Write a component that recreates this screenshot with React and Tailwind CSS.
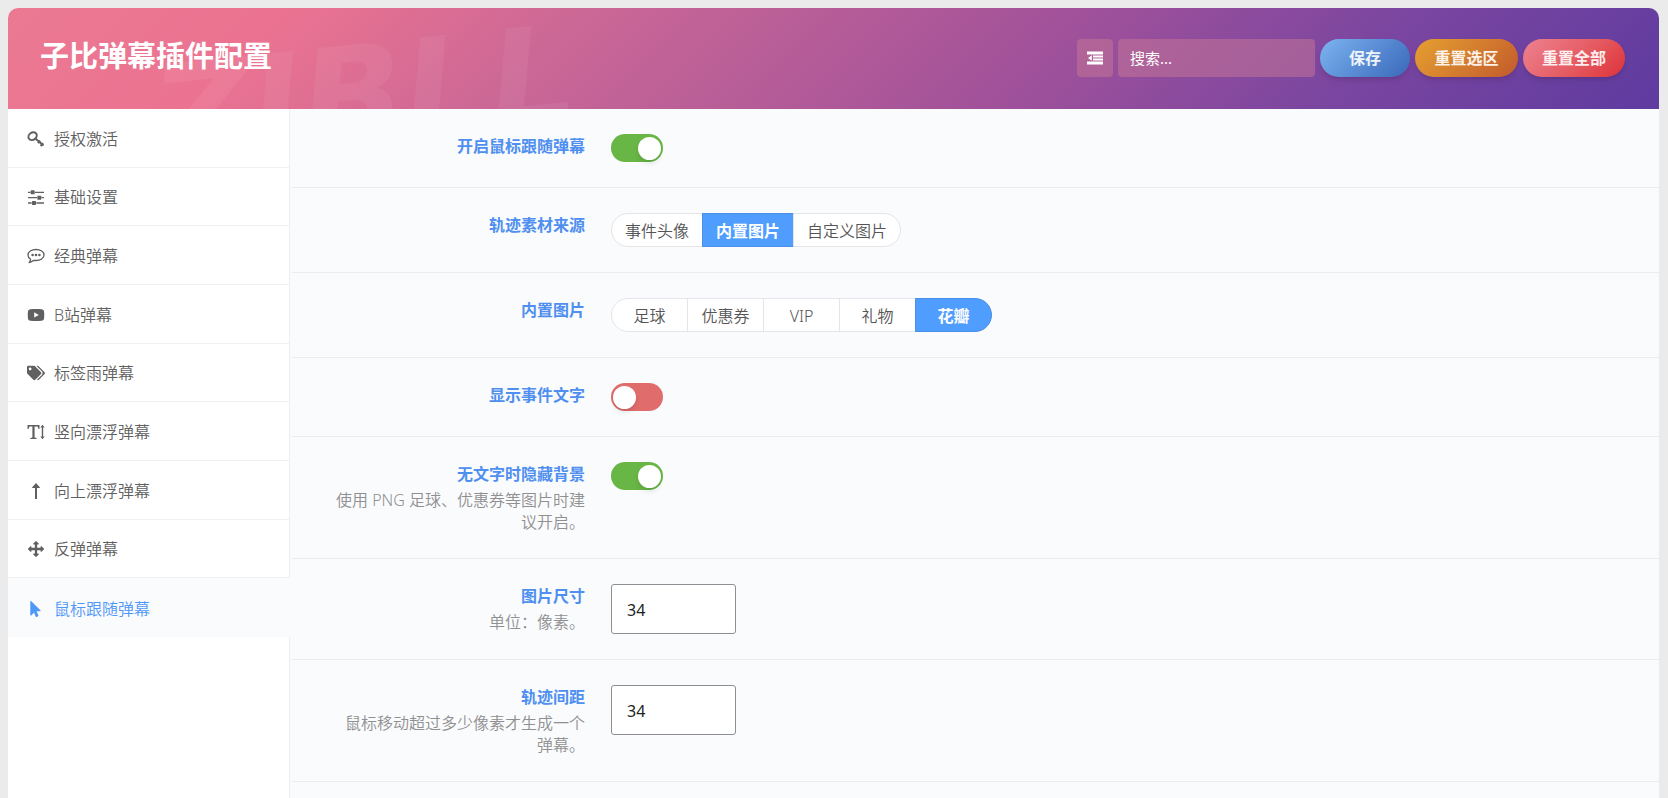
import React, { useState } from 'react'
import { FaTags } from 'react-icons/fa'

const menuItems = [
  { label: '授权激活', icon: KeyIcon },
  { label: '基础设置', icon: SlidersIcon },
  { label: '经典弹幕', icon: CommentIcon },
  { label: 'B站弹幕', icon: PlayIcon },
  { label: '标签雨弹幕', icon: FaTags },
  { label: '竖向漂浮弹幕', icon: TextHeightIcon },
  { label: '向上漂浮弹幕', icon: ArrowUpIcon },
  { label: '反弹弹幕', icon: MoveIcon },
  { label: '鼠标跟随弹幕', icon: PointerIcon }
]

const sources = ['事件头像', '内置图片', '自定义图片']
const pictures = ['足球', '优惠券', 'VIP', '礼物', '花瓣']

export default function App() {
  const [active, setActive] = useState('鼠标跟随弹幕')
  const [enabled, setEnabled] = useState(true)
  const [source, setSource] = useState('内置图片')
  const [picture, setPicture] = useState('花瓣')
  const [showText, setShowText] = useState(false)
  const [hideBg, setHideBg] = useState(true)
  const [size, setSize] = useState('34')
  const [distance, setDistance] = useState('34')

  return (
    <div className="flex min-h-screen flex-col bg-[#eaebea] pt-2 pr-[9px] pl-2 font-['Noto_Sans','Noto_Sans_CJK_SC',sans-serif] text-base font-[350] text-[#555]">
      <div className="flex grow flex-col overflow-hidden rounded-t-[10px] bg-white">
        {/* Header */}
        <header className="relative flex items-start justify-between overflow-hidden bg-[linear-gradient(135deg,#eb7992_0%,#eb7391_16%,#ca6796_34%,#a0519a_62%,#7b46a0_80%,#5f3ba0_100%)] pt-[31px] pr-[34px] pb-8 pl-8">
          <span aria-hidden="true" className="pointer-events-none absolute top-5 left-[145px] -rotate-6 font-['DejaVu_Sans',sans-serif] text-[135px] leading-none font-bold text-white/6 italic">ZIBLL</span>
          <h1 className="relative text-[29px] leading-[34px] font-bold text-white">子比弹幕插件配置</h1>
          <div className="relative flex items-center gap-[5px]">
            <button aria-label="展开全部" className="flex h-[38px] w-9 items-center justify-center rounded bg-[#c87896]/50 text-white">
              <OutdentIcon className="h-4 w-4" />
            </button>
            <input
              type="text"
              aria-label="搜索"
              placeholder="搜索..."
              className="h-[38px] w-[197px] rounded bg-[#c87896]/50 px-3 text-[15px] font-normal text-white placeholder:text-white focus:outline-none"
            />
            <button className="h-[38px] w-[90px] rounded-full bg-linear-135 from-[#7db4f0] to-[#3a68ba] font-bold text-white/90 shadow-md">保存</button>
            <button className="h-[38px] w-[103px] rounded-full bg-linear-135 from-[#e5a030] to-[#c25a2c] font-bold text-white/90 shadow-md">重置选区</button>
            <button className="h-[38px] w-[102px] rounded-full bg-linear-135 from-[#ec8290] to-[#dd2f38] font-bold text-white/90 shadow-md">重置全部</button>
          </div>
        </header>

        <div className="flex grow">
          {/* Sidebar */}
          <aside className="w-[282px] shrink-0 border-r border-[#eceef0]">
            <nav className="grid h-[528px] grid-rows-9">
              {menuItems.map(({ label, icon: Icon }) => (
                <a
                  key={label}
                  href="#"
                  onClick={() => setActive(label)}
                  className={
                    active === label
                      ? '-mr-px flex items-center gap-[9px] bg-[#fafbfd] pt-0.5 pl-[19px] text-[#4f97f7]'
                      : 'flex items-center gap-[9px] border-b border-[#f0f0f0] pt-0.5 pl-[19px] text-[#606060]'
                  }
                >
                  <Icon className="h-4 w-[18px]" />
                  {label}
                </a>
              ))}
            </nav>
          </aside>

          {/* Fields */}
          <main className="grow bg-[#fafbfd] pl-0.5">
            <Field id="enabled" title="开启鼠标跟随弹幕">
              <Toggle id="enabled" checked={enabled} onChange={setEnabled} />
            </Field>
            <Field title="轨迹素材来源">
              <ButtonSet name="轨迹素材来源" options={sources} value={source} onChange={setSource} />
            </Field>
            <Field title="内置图片">
              <ButtonSet name="内置图片" options={pictures} value={picture} onChange={setPicture} />
            </Field>
            <Field id="showText" title="显示事件文字">
              <Toggle id="showText" checked={showText} onChange={setShowText} />
            </Field>
            <Field id="hideBg" title="无文字时隐藏背景" desc="使用 PNG 足球、优惠券等图片时建议开启。">
              <Toggle id="hideBg" checked={hideBg} onChange={setHideBg} />
            </Field>
            <Field id="size" title="图片尺寸" desc="单位：像素。">
              <NumberBox id="size" value={size} onChange={setSize} />
            </Field>
            <Field id="distance" title="轨迹间距" desc="鼠标移动超过多少像素才生成一个弹幕。">
              <NumberBox id="distance" value={distance} onChange={setDistance} />
            </Field>
          </main>
        </div>
      </div>
    </div>
  )
}

function Field({ id, title, desc, children }) {
  const Title = id ? 'label' : 'h4'
  return (
    <div className="flex items-start gap-[26px] border-b border-[#ebecef] py-[25px] pl-[39px]">
      <div className="w-[254px] shrink-0 text-right">
        <Title htmlFor={id} className="block leading-6 font-bold text-[#4f8ff0]">{title}</Title>
        {desc && <p className="mt-[3px] leading-[22px] text-[#909090]">{desc}</p>}
      </div>
      {children}
    </div>
  )
}

function Toggle({ id, checked, onChange }) {
  return (
    <input
      id={id}
      type="checkbox"
      checked={checked}
      onChange={(e) => onChange(e.target.checked)}
      className="flex h-7 w-[52px] cursor-pointer appearance-none items-center rounded-full bg-[#e06c6c] px-0.5 before:h-[23px] before:w-[23px] before:rounded-full before:bg-white before:shadow-md before:content-[''] checked:justify-end checked:bg-[#68b645]"
    />
  )
}

function ButtonSet({ name, options, value, onChange }) {
  return (
    <div role="radiogroup" aria-label={name} className="flex pl-px">
      {options.map((option) => (
        <label
          key={option}
          className="-ml-px flex h-[34px] min-w-[77px] cursor-pointer items-center justify-center border border-[#e3e5e9] bg-white px-[13px] pt-0.5 first:rounded-l-full last:rounded-r-full has-checked:border-[#4a8fe8] has-checked:bg-[#4f9dfe] has-checked:font-bold has-checked:text-white"
        >
          <input
            type="radio"
            name={name}
            value={option}
            checked={value === option}
            onChange={() => onChange(option)}
            className="h-0 w-0 appearance-none"
          />
          {option}
        </label>
      ))}
    </div>
  )
}

function NumberBox({ id, value, onChange }) {
  return (
    <input
      id={id}
      type="text"
      inputMode="numeric"
      value={value}
      onChange={(e) => onChange(e.target.value)}
      className="h-[50px] w-[125px] rounded-[3px] border border-[#8c8f94] bg-white px-[15px] pt-0.5 font-normal text-[#222]"
    />
  )
}

// Icons
function OutdentIcon({ className }) {
  return (
    <svg className={className} viewBox="0 0 16 16" fill="currentColor">
      <path d="M0 1.500h16v3H0zM6 5.500h10v2H6zM6 8.500h10v2H6zM0 11.500h16v3H0zM4.800 5.200v5.600L1 8z" />
    </svg>
  )
}

function KeyIcon({ className }) {
  return (
    <svg className={className} viewBox="0 0 18 16" fill="none" stroke="currentColor" strokeWidth="2">
      <ellipse cx="5.600" cy="5.200" rx="4.400" ry="3.600" transform="rotate(-35 5.6 5.200)" />
      <path d="M8.300 7.600 16.600 14.600M10.900 12.200l2.300-2.600M13.600 15l2.400-2.900" />
    </svg>
  )
}

function SlidersIcon({ className }) {
  return (
    <svg className={className} viewBox="128 128 1536 1536" fill="currentColor">
      <path d="M480 1408v128h-352v-128h352zm352-128q26 0 45 19t19 45v256q0 26-19 45t-45 19h-256q-26 0-45-19t-19-45v-256q0-26 19-45t45-19h256zm160-384v128h-864v-128h864zm-640-512v128h-224v-128h224zm1312 1024v128h-736v-128h736zm-960-1152q26 0 45 19t19 45v256q0 26-19 45t-45 19h-256q-26 0-45-19t-19-45v-256q0-26 19-45t45-19h256zm640 512q26 0 45 19t19 45v256q0 26-19 45t-45 19h-256q-26 0-45-19t-19-45v-256q0-26 19-45t45-19h256zm320 128v128h-224v-128h224zm0-512v128h-864v-128h864z" />
    </svg>
  )
}

function CommentIcon({ className }) {
  return (
    <svg className={className} viewBox="0 0 18 16" fill="currentColor">
      <path d="M9 1.500c4.500 0 8 2.400 8 5.500s-3.500 5.500-8 5.500c-.9 0-1.700-.1-2.400-.2-1.200 1.100-2.700 1.800-4.400 2.200.9-.9 1.300-2 1.400-3.200C2 10.300 1 8.800 1 7c0-3.100 3.500-5.500 8-5.500z" fill="none" stroke="currentColor" strokeWidth="1.300" strokeLinejoin="round" />
      <circle cx="5.600" cy="7" r="1.300" />
      <circle cx="9" cy="7" r="1.300" />
      <circle cx="12.400" cy="7" r="1.300" />
    </svg>
  )
}

function PlayIcon({ className }) {
  return (
    <svg className={className} viewBox="0 0 18 16" fill="currentColor">
      <path fillRule="evenodd" d="M3.500 2.300C7 1.900 11 1.900 14.500 2.300c1.600.2 2.400 1 2.600 2.400.2 2.200.2 4.400 0 6.600-.2 1.400-1 2.200-2.600 2.400-3.500.4-7.500.4-11 0-1.600-.2-2.400-1-2.600-2.400-.2-2.200-.2-4.400 0-6.600.2-1.400 1-2.200 2.600-2.400zM7.200 5.300v5.200l4.600-2.600z" />
    </svg>
  )
}

function TextHeightIcon({ className }) {
  return (
    <svg className={className} viewBox="0 0 18 16" fill="currentColor">
      <path d="M.5 1h12v4h-1L10.600 2.400H7.600v11l2 .7v.9H3.400v-.9l2-.7v-11h-3L1.500 5h-1z" />
      <path d="M15.500.800l2.200 2.800h-1.500v8.800h1.500l-2.200 2.800-2.200-2.800h1.500V3.600h-1.500z" />
    </svg>
  )
}

function ArrowUpIcon({ className }) {
  return (
    <svg className={className} viewBox="0 0 18 16" fill="currentColor">
      <path d="M9 0l3.800 4.200c.2.300 0 .8-.4.800H10v11H8V5H5.600c-.4 0-.6-.5-.4-.8z" />
    </svg>
  )
}

function MoveIcon({ className }) {
  return (
    <svg className={className} viewBox="0 0 1792 1792" fill="currentColor">
      <path d="M1792 896q0 26-19 45l-256 256q-19 19-45 19t-45-19-19-45v-128h-384v384h128q26 0 45 19t19 45-19 45l-256 256q-19 19-45 19t-45-19l-256-256q-19-19-19-45t19-45 45-19h128v-384h-384v128q0 26-19 45t-45 19-45-19l-256-256q-19-19-19-45t19-45l256-256q19-19 45-19t45 19 19 45v128h384v-384h-128q-26 0-45-19t-19-45 19-45l256-256q19-19 45-19t45 19l256 256q19 19 19 45t-19 45-45 19h-128v384h384v-128q0-26 19-45t45-19 45 19l256 256q19 19 19 45z" />
    </svg>
  )
}

function PointerIcon({ className }) {
  return (
    <svg className={className} viewBox="0 0 1792 1792" fill="currentColor">
      <path d="M1389 1043q31 30 14 69-17 40-59 40h-382l201 476q10 25 0 49t-34 35l-177 75q-25 10-49 0t-35-34l-191-452-312 312q-19 19-45 19-12 0-24-5-40-17-40-59v-1504q0-42 40-59 12-5 24-5 27 0 45 19z" />
    </svg>
  )
}
